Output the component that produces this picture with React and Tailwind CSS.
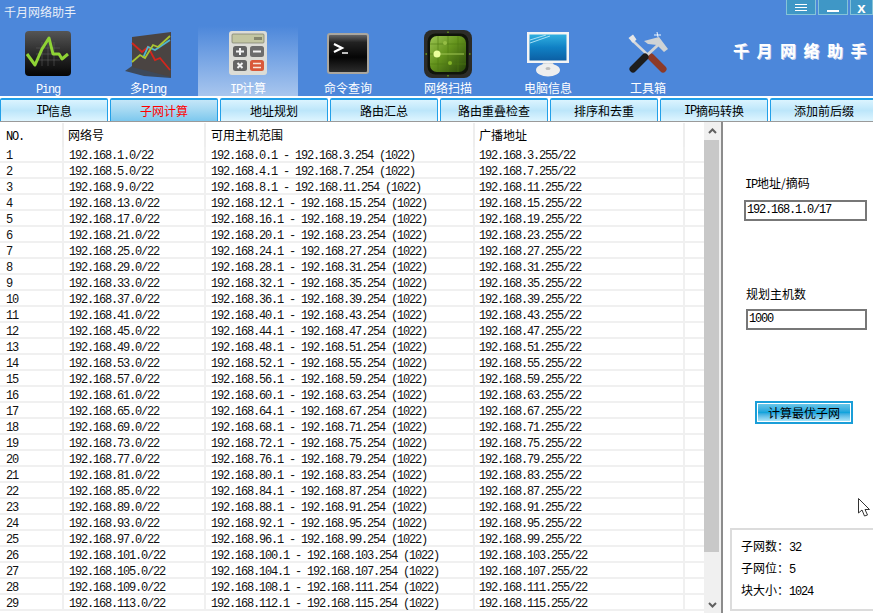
import React from 'react';

const L = ({ children }) => (
  <span className="font-['Liberation_Mono',monospace] text-[12px] tracking-[-1.2px]">{children}</span>
);

function PingIcon() {
  return (
    <svg width="48" height="48" viewBox="0 0 48 48">
      <defs>
        <linearGradient id="pg" x1="0" y1="0" x2="0" y2="1">
          <stop offset="0" stopColor="#555" />
          <stop offset="0.6" stopColor="#222" />
          <stop offset="1" stopColor="#050505" />
        </linearGradient>
      </defs>
      <rect x="1" y="1" width="46" height="45" rx="4" fill="url(#pg)" />
      <path d="M12 18H36M12 24H36M12 30H36M18 12V36M24 12V36M30 12V36" stroke="#666" strokeWidth="0.5" />
      <polyline points="3,24 11,35 18,19 25,8 29,24 35,24 38,29 44,24" fill="none" stroke="#8ed335" strokeWidth="3" strokeLinejoin="round" />
    </svg>
  );
}

function MultiPingIcon() {
  return (
    <svg width="48" height="48" viewBox="0 0 48 48">
      <polygon points="1,41 8,36 47,46 47,48 20,46" fill="#3a3a3a" opacity="0.8" />
      <polygon points="8,7 47,2 47,47 8,37" fill="#4a4442" />
      <polyline points="8,13 18,22 24,17 31,30 36,28 46,40" fill="none" stroke="#d3261d" strokeWidth="1.8" />
      <polyline points="19,28 24,17 31,20 46,10" fill="none" stroke="#4fb6d0" strokeWidth="1.8" />
      <polyline points="8,32 16,25 21,28 29,15 34,17 46,6" fill="none" stroke="#a9c531" strokeWidth="1.8" />
    </svg>
  );
}

function CalcIcon() {
  return (
    <svg width="48" height="48" viewBox="0 0 48 48">
      <rect x="5" y="1" width="38" height="44" rx="3" fill="#dcdcd6" />
      <rect x="8" y="4" width="32" height="9" rx="1" fill="#c3c6a2" stroke="#77786a" strokeWidth="0.7" />
      <rect x="30" y="7" width="8" height="3" fill="#85866f" />
      <rect x="9" y="16" width="14" height="11" rx="2.5" fill="#646464" />
      <rect x="26" y="16" width="14" height="11" rx="2.5" fill="#6d6d6d" />
      <rect x="9" y="30" width="14" height="11" rx="2.5" fill="#646464" />
      <rect x="26" y="30" width="14" height="11" rx="2.5" fill="#d9583a" />
      <path d="M12 21.5H20M16 18V25M29 21.5H37" stroke="#f2f2f2" strokeWidth="2" />
      <path d="M13.5 33L18.5 38M18.5 33L13.5 38" stroke="#f2f2f2" strokeWidth="2" />
      <path d="M29 33.5H37M29 37.5H37" stroke="#f8e6dc" strokeWidth="1.6" />
    </svg>
  );
}

function TerminalIcon() {
  return (
    <svg width="48" height="48" viewBox="0 0 48 48">
      <defs>
        <linearGradient id="tg" x1="0" y1="0" x2="0" y2="1">
          <stop offset="0" stopColor="#666" />
          <stop offset="0.2" stopColor="#222" />
          <stop offset="0.6" stopColor="#050505" />
          <stop offset="1" stopColor="#2c2c2c" />
        </linearGradient>
      </defs>
      <rect x="3" y="3" width="42" height="41" rx="3" fill="#aaa69e" />
      <rect x="5" y="5" width="38" height="37" rx="1" fill="url(#tg)" />
      <polyline points="10,14 18,18 10,22" fill="none" stroke="#fff" strokeWidth="2.2" />
      <path d="M18 23H24" stroke="#eee" strokeWidth="1.6" />
    </svg>
  );
}

function RadarIcon() {
  return (
    <svg width="48" height="48" viewBox="0 0 48 48">
      <defs>
        <linearGradient id="rg" x1="0" y1="0" x2="1" y2="1">
          <stop offset="0" stopColor="#9cc552" />
          <stop offset="0.45" stopColor="#64931c" />
          <stop offset="1" stopColor="#27450a" />
        </linearGradient>
      </defs>
      <rect x="0" y="0" width="48" height="48" rx="8" fill="#2c2c28" />
      <rect x="3.5" y="3.5" width="41" height="41" rx="8" fill="#10140a" />
      <rect x="6" y="6" width="36" height="36" rx="7" fill="url(#rg)" />
      <path d="M6 14H42M6 24H42M6 34H42M14 6V42M24 6V42M34 6V42" stroke="#4d7a12" strokeWidth="0.6" />
      <path d="M12 24H40" stroke="#b9dc68" strokeWidth="0.8" />
      <circle cx="13" cy="24" r="3.5" fill="#eaff9a" />
      <circle cx="26" cy="33" r="2" fill="#86b52a" />
      <circle cx="21" cy="13" r="2" fill="#95bd45" />
      <path d="M24 1.5V3M24 45V46.5M1.5 24H3M45 24H46.5" stroke="#6aa01c" strokeWidth="1.4" />
    </svg>
  );
}

function MonitorIcon() {
  return (
    <svg width="48" height="48" viewBox="0 0 48 48">
      <defs>
        <linearGradient id="mg" x1="0" y1="0" x2="0" y2="1">
          <stop offset="0" stopColor="#30b0e0" />
          <stop offset="0.5" stopColor="#1080c4" />
          <stop offset="1" stopColor="#0c5fa4" />
        </linearGradient>
      </defs>
      <rect x="3" y="2" width="42" height="31" fill="#f4f4f4" />
      <rect x="5.5" y="4.5" width="37" height="26" fill="url(#mg)" />
      <path d="M6 10L22 5M6 13L26 6" stroke="#a8e0f5" strokeWidth="1" />
      <path d="M19 33H29L31 38H17Z" fill="#cfd3d8" />
      <ellipse cx="24" cy="40" rx="12" ry="6.5" fill="#eeeeee" />
      <ellipse cx="24" cy="38.5" rx="2.5" ry="1.6" fill="#bdbdbd" />
    </svg>
  );
}

function ToolsIcon() {
  return (
    <svg width="48" height="48" viewBox="0 0 48 48">
      <path d="M8 10L26 27" stroke="#d4d7da" strokeWidth="2.5" />
      <path d="M4.5 8L9 4.5L12.5 9.5L9 13Z" fill="#e6e6e6" />
      <path d="M27 27L39 39" stroke="#8c3a28" strokeWidth="7" strokeLinecap="round" />
      <path d="M34 15L21 27" stroke="#d0d3d5" strokeWidth="3" />
      <path d="M21 27L9 39" stroke="#1d1d1d" strokeWidth="7" strokeLinecap="round" />
      <polygon points="20,11 35,7 44,19 40,22 33,15 24,14" fill="#cfd3d5" />
      <path d="M33 2L34 7M30 5L37 5" stroke="#eef6ff" strokeWidth="1" />
    </svg>
  );
}

const navItems = [
  { label: <L>Ping</L>, icon: <PingIcon /> },
  { label: <>多<L>Ping</L></>, icon: <MultiPingIcon /> },
  { label: <><L>IP</L>计算</>, icon: <CalcIcon />, active: true },
  { label: '命令查询', icon: <TerminalIcon /> },
  { label: '网络扫描', icon: <RadarIcon /> },
  { label: '电脑信息', icon: <MonitorIcon /> },
  { label: '工具箱', icon: <ToolsIcon /> },
];

const tabs = [
  <><L>IP</L>信息</>,
  '子网计算',
  '地址规划',
  '路由汇总',
  '路由重叠检查',
  '排序和去重',
  <><L>IP</L>摘码转换</>,
  '添加前后缀',
];

const rows = Array.from({ length: 29 }, (_, i) => {
  const n = i + 1;
  return {
    no: n,
    net: `192.168.${4 * n - 3}.0/22`,
    range: `192.168.${4 * n - 4}.1 - 192.168.${4 * n - 1}.254 (1022)`,
    broadcast: `192.168.${4 * n - 1}.255/22`,
  };
});

const WinButton = ({ className, children }) => (
  <div className={`h-[15px] bg-[#3f97c6] border border-t-0 border-[#86c3d8] flex items-center justify-center ${className}`}>
    {children}
  </div>
);

export default function App() {
  return (
    <div className="w-[873px] h-[613px] relative overflow-hidden bg-white text-black text-[12px] font-['Noto_Sans_CJK_SC','Liberation_Sans',sans-serif]">
      <div className="h-[96px] bg-[#4c87da] flex flex-col">
        <div className="h-[26px] flex justify-between">
          <div className="pl-[4px] pt-[3px] leading-[18px] text-[#e8eef8]">千月网络助手</div>
          <div className="flex gap-[2px]">
            <WinButton className="w-[30px]">
              <div className="w-[12px] h-[7px] border-y border-white flex items-center"><div className="w-full h-px bg-white" /></div>
            </WinButton>
            <WinButton className="w-[30px]">
              <div className="w-[12px] h-[2px] bg-white mt-[7px]" />
            </WinButton>
            <WinButton className="w-[23px]">
              <span className="text-white font-bold text-[15px] leading-none font-['Liberation_Sans',sans-serif]">x</span>
            </WinButton>
          </div>
        </div>
        <div className="flex h-[70px]">
          <div className="flex -ml-[2px]">
            {navItems.map((item, i) => (
              <div
                key={i}
                className={`w-[100px] flex flex-col items-center pt-[4px] ${item.active ? 'bg-gradient-to-b from-[#4c87da] to-[#a8c6ee]' : ''}`}
              >
                <div className="h-[48px]">{item.icon}</div>
                <div className="text-white h-[16px] leading-[16px] mt-[2px]">{item.label}</div>
              </div>
            ))}
          </div>
          <div className="ml-auto pt-[13px] text-[16px] leading-[22px] font-bold tracking-[7.5px] -mr-[1px] text-white [text-shadow:1px_1px_0_#c8d4f0]">
            千月网络助手
          </div>
        </div>
      </div>

      <div className="h-[26px] flex gap-[2px] pt-[2px] bg-white border-b border-[#9a9a9a] box-border">
        {tabs.map((tab, i) => (
          <div
            key={i}
            className={`w-[108px] shrink-0 h-[23px] flex items-center justify-center border-t-2 border-x border-[#22a0e8] rounded-t-[2px] bg-gradient-to-b ${i === 1 ? 'from-[#c4e6f8] via-[#a3d8f2] to-[#7cc8ee] text-[#ff0000]' : 'from-[#dbf4ff] via-[#bce6fa] to-[#def5ff]'}`}
          >
            {tab}
          </div>
        ))}
      </div>

      <div className="flex h-[491px]">
        <div className="w-[704px] shrink-0 overflow-hidden">
          <div className="grid grid-cols-[62px_142px_269px_210px_21px] h-[25px] items-center">
            <div className="pl-[6px] h-[24px] leading-[24px]"><L>NO.</L></div>
            <div className="pl-[4px] h-[24px] leading-[24px] border-l-2 border-[#eeeeee]">网络号</div>
            <div className="pl-[5px] h-[24px] leading-[24px] border-l-2 border-[#eeeeee]">可用主机范围</div>
            <div className="pl-[4px] h-[24px] leading-[24px] border-l-2 border-[#eeeeee]">广播地址</div>
            <div className="h-[24px] border-l-2 border-[#eeeeee]" />
          </div>
          {rows.map((r) => (
            <div key={r.no} className="grid grid-cols-[62px_142px_269px_210px_21px] h-[16px] box-border border-b-2 border-[#f0f0f0] leading-[14px] text-[#111]">
              <div className="pl-[6px]"><L>{r.no}</L></div>
              <div className="pl-[5px] border-l-2 border-[#f0f0f0]"><L>{r.net}</L></div>
              <div className="pl-[5px] border-l-2 border-[#f0f0f0]"><L>{r.range}</L></div>
              <div className="pl-[4px] border-l-2 border-[#f0f0f0]"><L>{r.broadcast}</L></div>
              <div className="border-l-2 border-[#f0f0f0]" />
            </div>
          ))}
        </div>

        <div className="w-[17px] shrink-0 bg-[#f0f0f0] flex flex-col">
          <div className="h-[18px] flex items-center justify-center">
            <svg width="9" height="6" viewBox="0 0 9 6"><path d="M1 5L4.5 1.5L8 5" fill="none" stroke="#606060" strokeWidth="2" /></svg>
          </div>
          <div className="h-[412px] w-[15px] bg-[#c8c8c8]" />
          <div className="flex-1 flex items-end justify-center pb-[5px]">
            <svg width="9" height="6" viewBox="0 0 9 6"><path d="M1 1L4.5 4.5L8 1" fill="none" stroke="#606060" strokeWidth="2" /></svg>
          </div>
        </div>

        <div className="flex-1 border-l-2 border-[#8c8c8c] flex flex-col">
          <div className="ml-[22px] mt-[52px] h-[18px] leading-[18px]"><L>IP</L>地址/摘码</div>
          <div className="ml-[21px] mt-[8px] w-[123px] h-[21px] box-border border-2 border-[#777] leading-[11px] pl-[1px]"><L>192.168.1.0/17</L></div>
          <div className="ml-[23px] mt-[64px] h-[18px] leading-[18px]">规划主机数</div>
          <div className="ml-[23px] mt-[6px] w-[121px] h-[21px] box-border border-2 border-[#777] leading-[11px] pl-[1px]"><L>1000</L></div>
          <div className="ml-[32px] mt-[71px] w-[98px] h-[23px] box-border border-2 border-[#1a9ed8]">
            <div className="w-full h-full border border-white bg-gradient-to-b from-[#66c6e8] via-[#12a4dc] to-[#a8e4f8] flex items-center justify-center">计算最优子网</div>
          </div>
          <div className="ml-[7px] mt-[104px] h-[83px] box-border border-2 border-r-0 border-[#dcdcdc] pl-[9px] pt-[5px]">
            <div className="h-[22px] leading-[22px]">子网数：<L>32</L></div>
            <div className="h-[22px] leading-[22px]">子网位：<L>5</L></div>
            <div className="h-[22px] leading-[22px]">块大小：<L>1024</L></div>
          </div>
        </div>
      </div>

      <svg className="absolute left-[857px] top-[497px]" width="14" height="21" viewBox="0 0 14 21">
        <path d="M1.5 1.5V16L5 13L7.5 19L10.5 18L8 12.5H12.5Z" fill="#fff" stroke="#333" strokeWidth="1" />
      </svg>
    </div>
  );
}
